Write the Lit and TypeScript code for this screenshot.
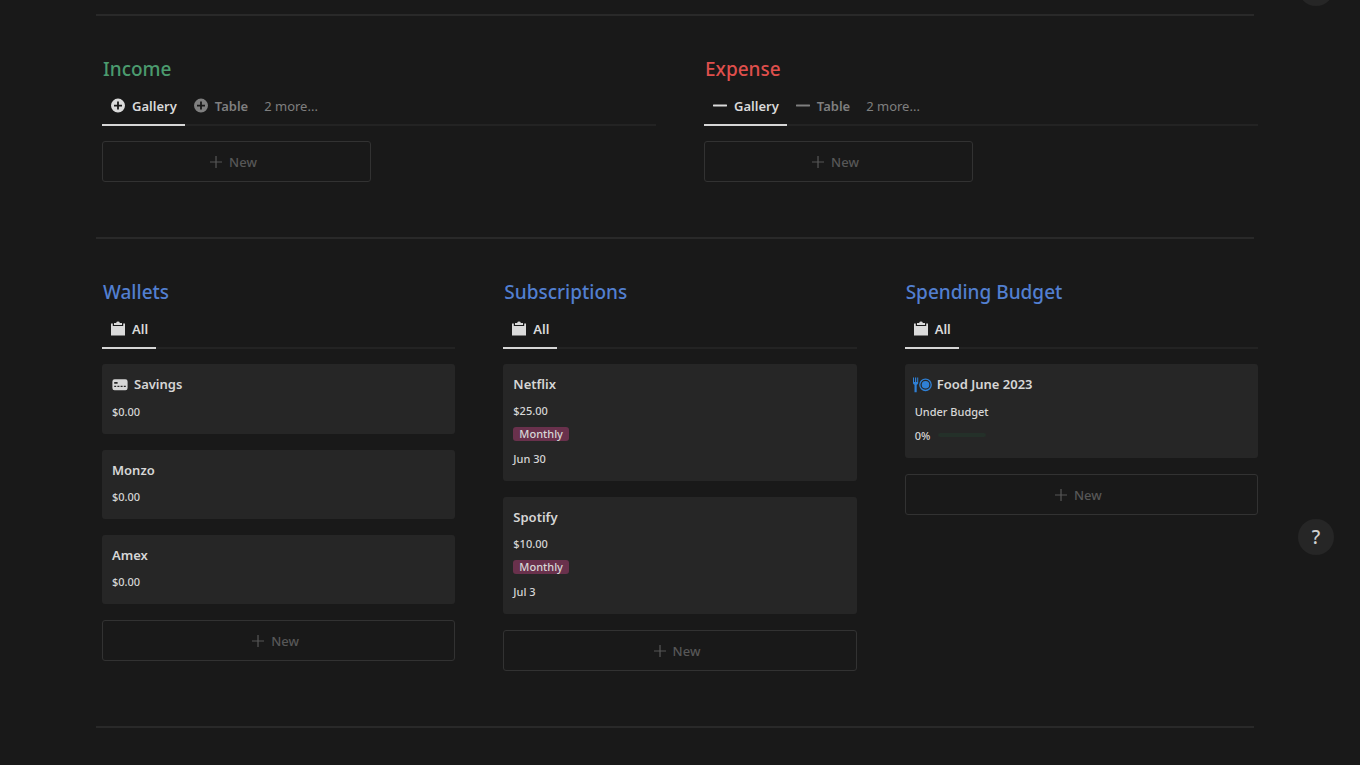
import { LitElement, html, svg, css, nothing } from "lit";
import { customElement, property } from "lit/decorators.js";

type IconName = "plusCircle" | "minus" | "clipboard" | "bankCard" | "food" | "plus";

const shapes: Record<IconName, unknown> = {
  plusCircle: svg`<path fill-rule="evenodd" fill="currentColor" d="M8 .6a7 7 0 1 0 0 14A7 7 0 0 0 8 .6ZM7.1 3.6h1.8v3.1H12v1.8H8.9v3.1H7.1V8.500H4V6.700h3.100Z"/>`,
  minus: svg`<rect x="1" y="6.600" width="14" height="1.800" rx="0.4" fill="currentColor"/>`,
  clipboard: svg`<path fill="currentColor" d="M1 2.4h1.800v2.600h10.400V2.400H15V14.600H1Z"/><path fill="currentColor" d="M4 4V2h2.100a2 2 0 0 1 3.800 0H12v2Z"/>`,
  bankCard: svg`<path fill-rule="evenodd" fill="currentColor" d="M2.6 2.2h10.8a2.2 2.2 0 0 1 2.2 2.2v6.6a2.2 2.2 0 0 1-2.2 2.2H2.6A2.2 2.2 0 0 1 .4 11V4.400a2.200 2.200 0 0 1 2.200-2.200ZM2.200 5.100v1.600h3.400V5.100ZM2.200 8.700v1.400h2V8.700Zm3.200 0v1.400h2V8.700Zm3.200 0v1.400h2V8.700Zm3.200 0v1.400h2V8.700Z"/>`,
  food: svg`<path fill="currentColor" d="M0 .6h1V5h1V.6h1.200V5h1V.6h1v5.200c0 1-.6 1.700-1.500 2V15.200H1.500V7.800C.6 7.500 0 6.800 0 5.800Z"/><circle cx="12.5" cy="7.800" r="5.700" fill="none" stroke="currentColor" stroke-width="1.300"/><circle cx="12.5" cy="7.800" r="3.800" fill="currentColor"/>`,
  plus: svg`<path stroke="currentColor" stroke-width="1.2" fill="none" d="M6 0v12M0 6h12"/>`,
};

const icon = (name: IconName) => {
  const box = name === "food" ? "0 0 19 16" : name === "plus" ? "0 0 12 12" : "0 0 16 16";
  return html`<svg class="icon ${name}" viewBox=${box} aria-hidden="true">${shapes[name]}</svg>`;
};

interface Tab {
  label: string;
  icon: IconName;
}
interface Card {
  title: string;
  icon?: IconName;
  lines: string[];
  tag?: string;
  date?: string;
  progress?: number;
}

const shared = css`
  * {
    box-sizing: border-box;
  }
  button {
    margin: 0;
    padding: 0;
    border: 0;
    background: none;
    color: inherit;
    font: inherit;
    cursor: pointer;
  }
  .icon {
    display: block;
    flex: none;
    width: 16px;
    height: 16px;
  }
  .icon.plus {
    width: 12px;
    height: 12px;
  }
  .icon.food {
    width: 19px;
    color: #2f80d6;
  }
`;

@customElement("record-card")
export class RecordCard extends LitElement {
  @property({ attribute: false }) card!: Card;

  static styles = [
    shared,
    css`
      :host {
        display: block;
      }
      .card {
        padding: 10px 10px 11px;
        border-radius: 3px;
        background: #262626;
        color: #d6d6d6;
      }
      .title {
        display: flex;
        align-items: center;
        gap: 6px;
        margin: 0 0 4px;
        font-size: 13px;
        line-height: 20px;
        font-weight: 600;
      }
      .title.with-icon {
        line-height: 21px;
      }
      .title.wide-icon {
        gap: 5px;
        margin-left: -2px;
      }
      .line {
        display: flex;
        align-items: center;
        gap: 8px;
        height: 24px;
        font-size: 11px;
        font-weight: 500;
      }
      .tag {
        padding: 0 6px;
        border-radius: 3px;
        background: #69314c;
        line-height: 14px;
      }
      .track {
        width: 48px;
        height: 4px;
        border-radius: 2px;
        background: #243029;
        overflow: hidden;
      }
      .fill {
        height: 100%;
        background: #529e72;
      }
    `,
  ];

  render() {
    const c = this.card;
    const mods = `${c.icon ? "with-icon" : ""} ${c.icon === "food" ? "wide-icon" : ""}`;
    return html`<article class="card">
      <h3 class="title ${mods}">${c.icon ? icon(c.icon) : nothing}<span>${c.title}</span></h3>
      ${c.lines.map((l) => html`<div class="line">${l}</div>`)}
      ${c.tag ? html`<div class="line"><span class="tag">${c.tag}</span></div>` : nothing}
      ${c.date ? html`<div class="line">${c.date}</div>` : nothing}
      ${c.progress !== undefined
        ? html`<div class="line">
            <span>${c.progress}%</span>
            <div class="track"><div class="fill" style="width:${c.progress}%"></div></div>
          </div>`
        : nothing}
    </article>`;
  }
}

@customElement("database-view")
export class DatabaseView extends LitElement {
  @property() heading = "";
  @property() tone = "blue";
  @property({ attribute: false }) tabs: Tab[] = [];
  @property({ attribute: false }) cards: Card[] = [];
  @property() more = "";
  @property({ type: Number }) columns = 1;

  static styles = [
    shared,
    css`
      :host {
        display: block;
        min-width: 0;
      }
      .heading {
        margin: 0 0 4px;
        padding-left: 1px;
        font-size: 19px;
        line-height: 28px;
        font-weight: 500;
      }
      .green {
        color: #4b9b6e;
      }
      .red {
        color: #df4f4c;
      }
      .blue {
        color: #527fd0;
      }
      .tabs {
        display: flex;
        height: 39px;
        margin-bottom: 15px;
        box-shadow: inset 0 -2px #232323;
        color: #7f7f7f;
        font-size: 13px;
      }
      .tab {
        display: flex;
        align-items: center;
        gap: 6px;
        padding: 0 8px;
        border-bottom: 2px solid transparent;
        font-weight: 600;
      }
      .tab.active {
        border-color: #d6d6d6;
        color: #dadada;
      }
      .more {
        padding: 0 8px;
        border-bottom: 2px solid transparent;
      }
      .grid {
        display: grid;
        gap: 16px;
      }
      .two {
        grid-template-columns: 1fr 1fr;
      }
      .new {
        display: flex;
        align-items: center;
        justify-content: center;
        gap: 7px;
        height: 41px;
        padding-right: 6px;
        border: 1px solid #323232;
        border-radius: 3px;
        color: #575757;
        font-size: 13px;
        font-weight: 500;
      }
    `,
  ];

  render() {
    return html`<section>
      <h2 class="heading ${this.tone}">${this.heading}</h2>
      <div class="tabs" role="tablist">
        ${this.tabs.map(
          (t, i) => html`<button class="tab ${i === 0 ? "active" : ""}" role="tab" aria-selected=${i === 0}>
            ${icon(t.icon)}<span>${t.label}</span>
          </button>`
        )}
        ${this.more ? html`<button class="more">${this.more}</button>` : nothing}
      </div>
      <div class="grid ${this.columns === 2 ? "two" : ""}">
        ${this.cards.map((c) => html`<record-card .card=${c}></record-card>`)}
        <button class="new">${icon("plus")}<span>New</span></button>
      </div>
    </section>`;
  }
}

const views = (name: IconName): Tab[] => [
  { label: "Gallery", icon: name },
  { label: "Table", icon: name },
];
const all: Tab[] = [{ label: "All", icon: "clipboard" }];

const wallets: Card[] = [
  { title: "Savings", icon: "bankCard", lines: ["$0.00"] },
  { title: "Monzo", lines: ["$0.00"] },
  { title: "Amex", lines: ["$0.00"] },
];
const subscriptions: Card[] = [
  { title: "Netflix", lines: ["$25.00"], tag: "Monthly", date: "Jun 30" },
  { title: "Spotify", lines: ["$10.00"], tag: "Monthly", date: "Jul 3" },
];
const budget: Card[] = [{ title: "Food June 2023", icon: "food", lines: ["Under Budget"], progress: 0 }];

@customElement("app-root")
export class AppRoot extends LitElement {
  static styles = [
    shared,
    css`
      :host {
        display: block;
        position: relative;
        min-height: 100vh;
        overflow: hidden;
        background: #191919;
        font-family: "Noto Sans", "Open Sans", sans-serif;
      }
      .page {
        padding: 14px 102px 36px;
      }
      .rule {
        height: 2px;
        margin: 0 4px 0 -6px;
        border: 0;
        background: #292929;
      }
      .row {
        display: grid;
        gap: 48px;
        padding: 39px 0 55px;
      }
      .halves {
        grid-template-columns: repeat(2, minmax(0, 1fr));
      }
      .thirds {
        grid-template-columns: repeat(3, minmax(0, 1fr));
      }
      .float {
        position: absolute;
        right: 26px;
        width: 36px;
        height: 36px;
        border-radius: 50%;
        background: #262626;
        color: #d0d0d0;
        font-size: 19px;
        font-weight: 500;
        line-height: 36px;
      }
      .float.help {
        bottom: 210px;
      }
      .float.top {
        top: -30px;
      }
    `,
  ];

  render() {
    return html`<main class="page">
        <hr class="rule" />
        <div class="row halves">
          <database-view heading="Income" tone="green" .tabs=${views("plusCircle")} more="2 more..." columns="2"></database-view>
          <database-view heading="Expense" tone="red" .tabs=${views("minus")} more="2 more..." columns="2"></database-view>
        </div>
        <hr class="rule" />
        <div class="row thirds">
          <database-view heading="Wallets" .tabs=${all} .cards=${wallets}></database-view>
          <database-view heading="Subscriptions" .tabs=${all} .cards=${subscriptions}></database-view>
          <database-view heading="Spending Budget" .tabs=${all} .cards=${budget}></database-view>
        </div>
        <hr class="rule" />
      </main>
      <button class="float top" aria-label="Scroll up"></button>
      <button class="float help" aria-label="Help">?</button>`;
  }
}
